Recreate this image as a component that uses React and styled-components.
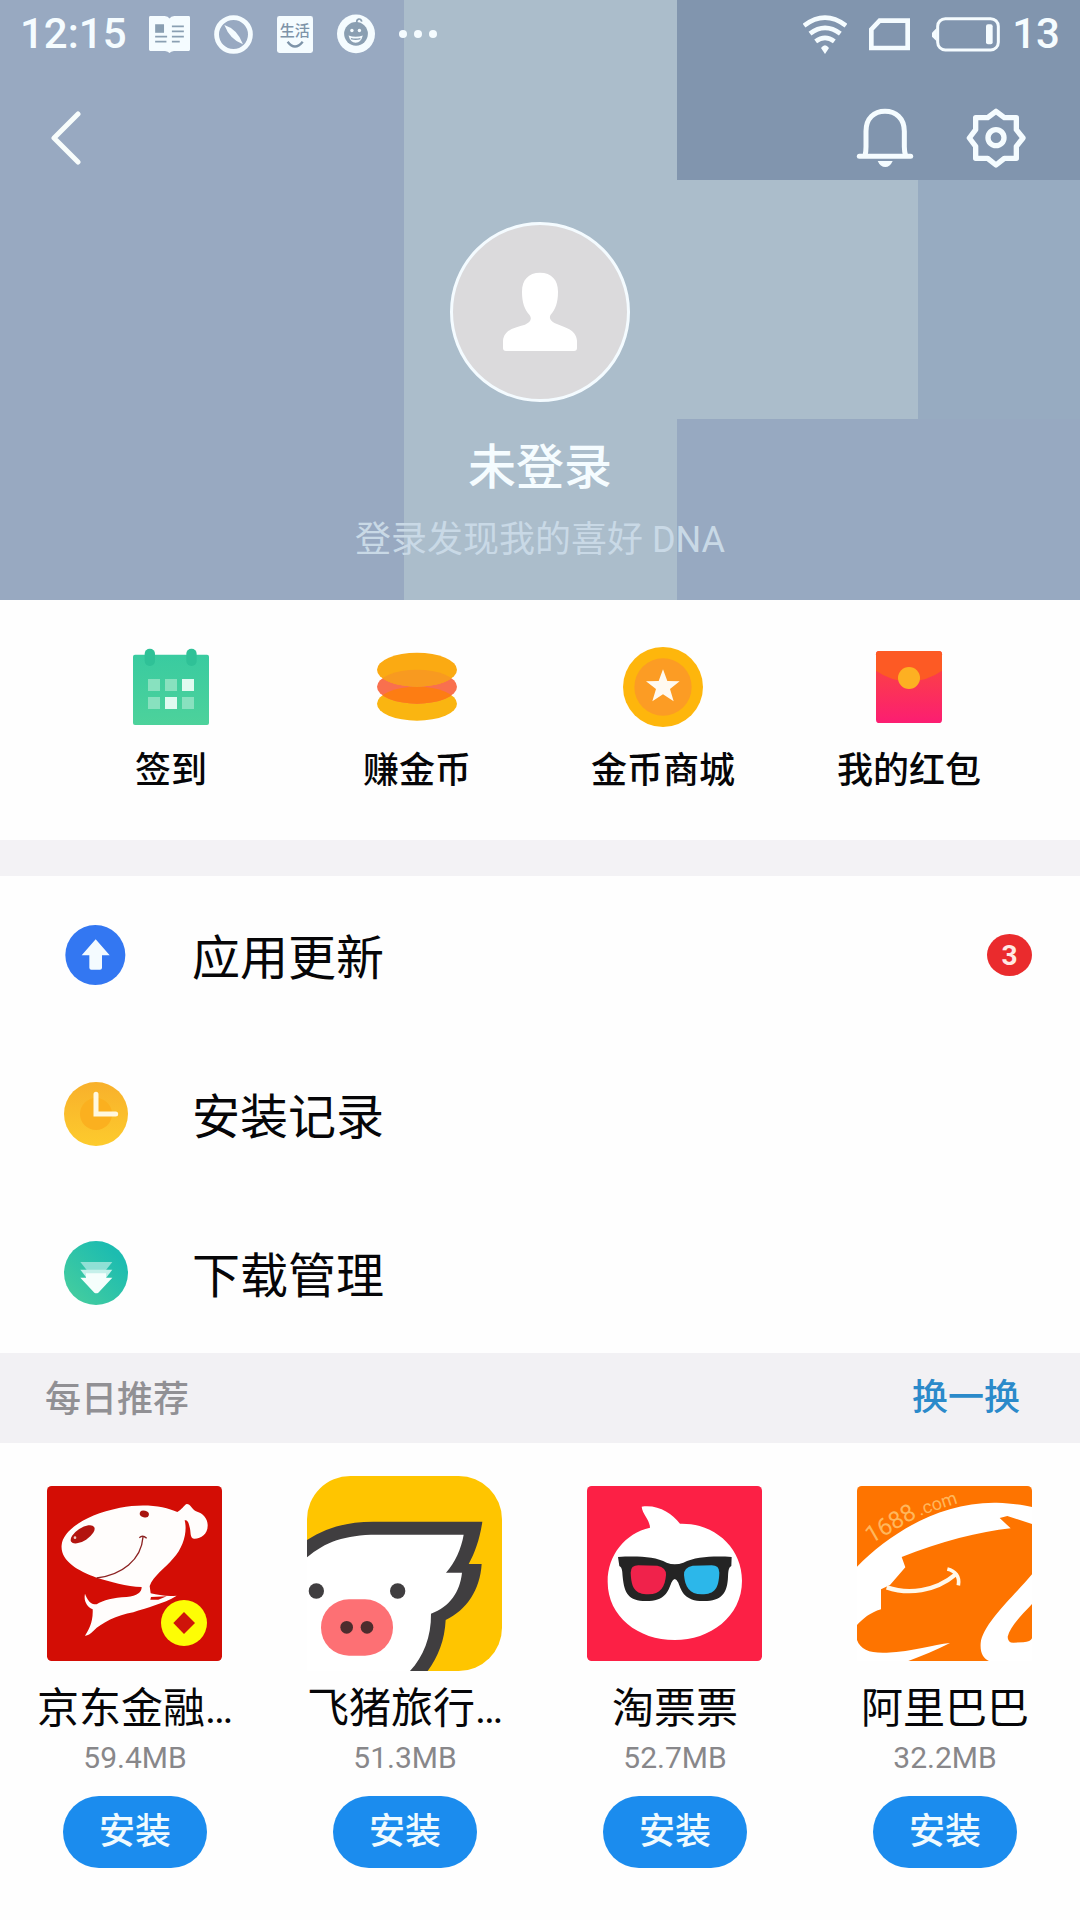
import React from 'react';
import styled, { createGlobalStyle } from 'styled-components';

const GlobalStyle = createGlobalStyle`
    * {
        box-sizing: border-box;
    }

    body {
        margin: 0;
        background-color: #fefefe;
        color: #060608;
        font-family: Roboto, "Noto Sans CJK SC", sans-serif;
    }

    button {
        margin: 0;
        padding: 0;
        border: none;
        background: none;
        color: inherit;
        font-family: inherit;
        cursor: pointer;
    }

    svg {
        display: block;
        flex-shrink: 0;
    }
`;

const Page = styled.div`
    display: flex;
    flex-direction: column;
    width: 100%;
`;

/* the three bands of the colour mosaic behind the profile */
const Hero = styled.header`
    display: flex;
    flex-direction: column;
    color: #f5fcff;
    background:
        linear-gradient(90deg, #98a9c1 37.4%, #abbdcb 37.4% 62.7%, #8195ae 62.7%) 0 0 / 100% 180px no-repeat,
        linear-gradient(90deg, #98a9c1 37.4%, #abbdcb 37.4% 85%, #97abc1 85%) 0 180px / 100% 239px no-repeat,
        linear-gradient(90deg, #98a9c1 37.4%, #abbdcb 37.4% 62.7%, #97a9c1 62.7%) 0 419px / 100% 100% no-repeat;
`;

const StatusBar = styled.div`
    display: flex;
    justify-content: space-between;
    align-items: center;
    height: 68px;
    padding: 0 20px;
    font-size: 42px;
    font-weight: 500;
    line-height: 48px;
`;

const StatusGroup = styled.div`
    display: flex;
    align-items: center;
    gap: ${({ $gap }) => $gap}px;
`;

const NavBar = styled.nav`
    display: flex;
    justify-content: space-between;
    align-items: center;
    height: 140px;
    padding: 0 54px 0 50px;
`;

const NavActions = styled.div`
    display: flex;
    gap: 51px;
`;

const Profile = styled.div`
    display: flex;
    flex-direction: column;
    align-items: center;
    padding: 14px 0 36px;
`;

const Avatar = styled.button`
    display: flex;
    justify-content: center;
    align-items: center;
    width: 180px;
    height: 180px;
    border: 3px solid #f4fbff;
    border-radius: 50%;
    background-color: #dbdadc;
`;

const UserName = styled.h1`
    margin: 34px 0 16px;
    font-size: 48px;
    font-weight: 500;
    line-height: 64px;
`;

const Hint = styled.p`
    margin: 0;
    color: #c9d9e6;
    font-size: 36px;
    line-height: 48px;
`;

const Shortcuts = styled.section`
    display: grid;
    grid-template-columns: repeat(4, 1fr);
    padding: 47px 48px 45px;
    border-bottom: 36px solid #f3f2f5;
`;

const Shortcut = styled.button`
    display: flex;
    flex-direction: column;
    align-items: center;
    gap: 20px;
    font-size: 36px;
    font-weight: 500;
    line-height: 48px;
`;

const Menu = styled.section`
    display: flex;
    flex-direction: column;
`;

const MenuItem = styled.button`
    display: flex;
    align-items: center;
    gap: 64px;
    height: 159px;
    padding: 0 48px 2px 64px;
    font-size: 48px;
    line-height: 64px;
    text-align: left;
`;

const MenuLabel = styled.span`
    padding-top: 8px;
`;

const Badge = styled.span`
    margin-left: auto;
    width: 45px;
    height: 42px;
    border-radius: 50%;
    background-color: #ea2b2d;
    color: #ffe9e4;
    font-size: 28px;
    font-weight: 700;
    line-height: 44px;
    text-align: center;
`;

const SectionBar = styled.div`
    display: flex;
    justify-content: space-between;
    align-items: center;
    height: 90px;
    padding: 0 60px 0 45px;
    background-color: #f2f1f4;
`;

const SectionTitle = styled.h2`
    margin: 0;
    padding-top: 4px;
    color: #919094;
    font-size: 36px;
    font-weight: 500;
    line-height: 48px;
`;

const Refresh = styled.button`
    color: #2b8aca;
    font-size: 36px;
    font-weight: 500;
    line-height: 48px;
`;

const AppGrid = styled.section`
    display: grid;
    grid-template-columns: repeat(4, 1fr);
    padding: 33px 0 52px;
`;

const AppCard = styled.article`
    display: flex;
    flex-direction: column;
    align-items: center;
`;

const AppLogo = styled.div`
    display: flex;
    justify-content: center;
    align-items: center;
    height: 195px;
    padding-right: 2px;
`;

const AppName = styled.h3`
    margin: 10px 0 3px;
    font-size: 42px;
    font-weight: 400;
    line-height: 56px;
`;

const AppSize = styled.span`
    color: #88878a;
    font-size: 30px;
    line-height: 36px;
`;

const Install = styled.button`
    margin-top: 20px;
    width: 144px;
    height: 72px;
    border-radius: 36px;
    background-color: #1b8cee;
    color: #f0fbff;
    font-size: 36px;
    font-weight: 500;
    line-height: 48px;
`;

const Icon = ({ w, h, box, children }) => (
    <svg width={w} height={h || w} viewBox={box} fill="none" aria-hidden="true">
        {children}
    </svg>
);

const BookIcon = () => (
    <Icon w={41} h={37} box="432 45 120 108">
        <path d="M436 45H478Q488 46 492 52Q496 46 506 45H548Q552 45 552 49V143Q552 147 548 147H505Q496 148 492 153Q488 148 479 147H436Q432 147 432 143V49Q432 45 436 45Z" fill="#f5fcff" />
        <path d="M450 69H476V94H450Z" fill="#8a9fb2" />
        <path d="M450 105H485M450 120H483M499 75H534M499 90H534M499 105H534M499 120H522" stroke="#8a9fb2" strokeWidth="5" />
    </Icon>
);

const CompassIcon = () => (
    <Icon w={39} box="620 43 113 113">
        <circle cx="676.5" cy="99.5" r="49" stroke="#f5fcff" strokeWidth="14" />
        <path d="M650 72Q688 84 704 128Q666 114 650 72Z" fill="#f5fcff" />
    </Icon>
);

const LifeIcon = () => (
    <Icon w={36} h={37} box="801 45 105 108">
        <rect x="801" y="45" width="105" height="108" rx="7" fill="#f5fcff" />
        <text x="853" y="104" fill="#7d93a8" fontSize="44" textAnchor="middle" fontFamily="Noto Sans CJK SC, sans-serif">生活</text>
        <path d="M832 120Q853 148 876 120" stroke="#7d93a8" strokeWidth="7" />
    </Icon>
);

const FaceIcon = () => (
    <Icon w={38} h={40} box="975 41 112 115">
        <ellipse cx="1031" cy="98" rx="56" ry="57" fill="#f5fcff" />
        <circle cx="1031" cy="98" r="35" fill="#8a9fb2" />
        <path d="M1034 68C1030 52 1046 50 1048 62" stroke="#8a9fb2" strokeWidth="5" />
        <circle cx="1019" cy="88" r="5" fill="#f5fcff" />
        <circle cx="1041" cy="88" r="5" fill="#f5fcff" />
        <path d="M1009 103Q1030 110 1051 103Q1046 124 1030 124Q1014 124 1009 103Z" fill="#f5fcff" />
        <path d="M1016 112Q1030 116 1044 112" stroke="#8a9fb2" strokeWidth="4" />
    </Icon>
);

const MoreIcon = () => (
    <Icon w={38} h={10} box="0 0 38 10">
        <circle cx="4" cy="5" r="4" fill="#f5fcff" />
        <circle cx="19" cy="5" r="4" fill="#f5fcff" />
        <circle cx="34" cy="5" r="4" fill="#f5fcff" />
    </Icon>
);

const WifiIcon = () => (
    <Icon w={44} h={39} box="126 41 132 117">
        <path d="M129 73Q192 25 255 73M147 97Q192 62 238 97M164 120Q192 99 220 120" stroke="#f5fcff" strokeWidth="14" />
        <path d="M180 140Q192 124 204 140L192 158Z" fill="#f5fcff" />
    </Icon>
);

const SimIcon = () => (
    <Icon w={41} h={33} box="330 50 123 99">
        <path d="M337 140V84L362 58H446V140Z" stroke="#f5fcff" strokeWidth="14" />
    </Icon>
);

const BatteryIcon = () => (
    <Icon w={68} h={35} box="516 47 204 105">
        <rect x="533" y="52" width="182" height="94" rx="23" stroke="#f5fcff" strokeWidth="9" />
        <path d="M530 80L516 94V106L530 120Z" fill="#f5fcff" />
        <rect x="678" y="69" width="20" height="60" rx="6" fill="#f5fcff" />
    </Icon>
);

const BackIcon = () => (
    <Icon w={31} h={54} box="0 0 31 54">
        <path d="M28 3L4 27L28 51" stroke="#f8fdfc" strokeWidth="5" strokeLinecap="round" strokeLinejoin="round" />
    </Icon>
);

const BellIcon = () => (
    <Icon w={60} box="285 324 180 180">
        <path d="M315 468Q318 455 318 440V394C318 354 343 334 375 334C407 334 433 354 433 394V440Q433 455 437 468" stroke="#f5fcff" strokeWidth="15" />
        <path d="M298 469H452" stroke="#f5fcff" strokeWidth="15" strokeLinecap="round" />
        <path d="M353 483H398Q390 501 376 501Q361 501 353 483Z" fill="#f5fcff" />
    </Icon>
);

const GearIcon = () => (
    <Icon w={60} box="618 324 180 180">
        <path
            d="M647 353H683L708 334L733 353H769V389L789 414L769 439V475H733L708 495L683 475H647V439L628 414L647 389Z"
            stroke="#f5fcff"
            strokeWidth="16"
            strokeLinejoin="round"
        />
        <circle cx="708" cy="413" r="24" stroke="#f5fcff" strokeWidth="16" />
    </Icon>
);

const PersonIcon = () => (
    <Icon w={90} box="495 201 270 270">
        <path d="M630 218C665 218 684 240 684 275C684 308 676 328 662 344C656 354 662 364 675 370C705 383 738 388 741 422V444Q741 453 732 453H528Q519 453 519 444V422C522 388 555 383 585 374C600 367 608 358 598 344C584 328 576 308 576 275C576 240 595 218 630 218Z" fill="#fff" />
    </Icon>
);

const CalendarIcon = () => (
    <Icon w={80} box="93 51 240 240">
        <defs>
            <linearGradient id="calendar" x1="0" y1="0" x2="0" y2="1">
                <stop offset="0" stopColor="#39cba0" />
                <stop offset="1" stopColor="#4dd29b" />
            </linearGradient>
        </defs>
        <rect x="99" y="74" width="228" height="211" rx="6" fill="url(#calendar)" />
        <rect x="134" y="56" width="31" height="52" rx="15" fill="#2fc197" />
        <rect x="259" y="56" width="31" height="52" rx="15" fill="#2fc197" />
        <path d="M144 147h36v36h-36zM195 147h36v36h-36zM144 201h36v36h-36zM246 201h36v36h-36z" fill="#88e1bf" />
        <path d="M246 147h36v36h-36zM195 201h36v36h-36z" fill="#e0faf0" />
    </Icon>
);

const CoinsIcon = () => (
    <Icon w={80} box="831 51 240 240">
        <defs>
            <clipPath id="coinTop"><ellipse cx="951" cy="119" rx="120" ry="51" /></clipPath>
            <clipPath id="coinBottom"><ellipse cx="951" cy="221" rx="120" ry="51" /></clipPath>
        </defs>
        <ellipse cx="951" cy="221" rx="120" ry="51" fill="#fab511" />
        <ellipse cx="951" cy="170" rx="120" ry="51" fill="#f9704e" />
        <ellipse cx="951" cy="170" rx="120" ry="51" fill="#fd7d13" clipPath="url(#coinBottom)" />
        <ellipse cx="951" cy="119" rx="120" ry="51" fill="#fbaa12" />
        <ellipse cx="951" cy="170" rx="120" ry="51" fill="#f89a20" clipPath="url(#coinTop)" />
    </Icon>
);

const StarCoinIcon = () => (
    <Icon w={80} box="249 51 240 240">
        <circle cx="369" cy="171" r="120" fill="#feb60c" />
        <circle cx="369" cy="171" r="86" fill="#fc9c24" />
        <path d="M369 118L382 153L419 154L390 177L401 214L369 193L337 214L348 177L318 154L356 153Z" fill="#fffaf0" />
    </Icon>
);

const EnvelopeIcon = () => (
    <Icon w={80} box="987 51 240 240">
        <defs>
            <linearGradient id="envelope" x1="0" y1="0" x2="0" y2="1">
                <stop offset="0.3" stopColor="#fb3d4a" />
                <stop offset="1" stopColor="#fc1d72" />
            </linearGradient>
        </defs>
        <rect x="1008" y="63" width="198" height="216" rx="10" fill="url(#envelope)" />
        <path d="M1008 122V73Q1008 63 1018 63H1196Q1206 63 1206 73V122Q1160 154 1107 154Q1054 154 1008 122Z" fill="#fd5a24" />
        <circle cx="1107" cy="144" r="33" fill="#fdb022" />
    </Icon>
);

const UpdateIcon = () => (
    <Icon w={64} box="102 67 192 192">
        <circle cx="196" cy="163" r="90" fill="#3377f2" />
        <path d="M197 116L239 164H216V201Q216 207 210 207H184Q178 207 178 201V164H155Z" fill="#f4fbff" />
    </Icon>
);

const ClockIcon = () => (
    <Icon w={64} box="102 546 192 192">
        <defs>
            <linearGradient id="clock" x1="0" y1="0" x2="0" y2="1">
                <stop offset="0" stopColor="#f8b02b" />
                <stop offset="1" stopColor="#fdcb2d" />
            </linearGradient>
        </defs>
        <circle cx="198" cy="642" r="96" fill="url(#clock)" />
        <circle cx="198" cy="642" r="48" fill="#fbb01f" />
        <path d="M198 583V642H257" stroke="#fff8e0" strokeWidth="15" strokeLinecap="round" />
    </Icon>
);

const DownloadIcon = () => (
    <Icon w={64} box="102 1023 192 192">
        <defs>
            <linearGradient id="download" x1="1" y1="0" x2="0" y2="1">
                <stop offset="0.2" stopColor="#1dbcb0" />
                <stop offset="1" stopColor="#4acf9c" />
            </linearGradient>
        </defs>
        <circle cx="198" cy="1119" r="96" fill="url(#download)" />
        <path d="M151 1086H247L228 1110H170Z" fill="#90e0d5" />
        <path d="M151 1109H247L228 1134H170Z" fill="#c5f0ea" />
        <path d="M151 1133H168V1120H228V1133H247L205 1178Q199 1182 193 1178Z" fill="#f5fefc" />
    </Icon>
);

const JdLogo = () => (
    <Icon w={175} box="51 78 525 525">
        <rect x="51" y="78" width="525" height="525" rx="14" fill="#d30d05" />
        <path
            d="M95 255C98 215 160 165 270 143C340 129 405 138 442 156C455 150 462 135 470 132C480 131 487 148 498 154C520 160 534 178 533 197C533 222 512 237 492 236C478 234 484 215 478 198C476 188 472 179 464 181C473 215 460 262 430 295C405 325 370 348 359 378L362 400C385 405 410 410 440 407C400 432 350 442 310 457C260 466 215 488 190 513C180 522 172 528 165 527C175 510 190 488 188 448C172 440 160 425 165 401C172 420 182 434 200 433C220 420 250 413 290 411C322 407 335 398 335 381C290 380 240 364 200 353C140 332 90 300 95 255Z"
            fill="#fffdfc"
        />
        <path d="M363 411L410 409L385 419H361Z" fill="#d30d05" />
        <ellipse cx="158" cy="223" rx="41" ry="19" transform="rotate(-33 158 223)" fill="#b3140f" />
        <circle cx="135" cy="233" r="4" fill="#f4c9c4" />
        <ellipse cx="343" cy="162" rx="14" ry="10" transform="rotate(15 343 162)" fill="#a8140f" />
        <path d="M200 354C275 345 334 300 339 231" stroke="#8c2222" strokeWidth="4" />
        <path d="M328 233Q338 224 350 235" stroke="#8c2222" strokeWidth="4" />
        <circle cx="462" cy="489" r="69" fill="#fdfd05" />
        <path d="M462 456L495 489L462 522L430 489Z" fill="#cf140a" />
    </Icon>
);

const FliggyLogo = () => (
    <Icon w={195} box="51 48 585 585">
        <rect x="51" y="48" width="585" height="585" rx="130" fill="#ffc500" />
        <path d="M51 240C110 203 170 185 250 185H577C570 235 555 278 536 312H575C570 390 530 450 467 480C464 540 445 590 413 633H51Z" fill="#403e40" />
        <path d="M51 292C105 246 165 224 260 224H521C514 265 495 308 468 338H516C510 395 480 440 423 461C424 530 400 590 360 633H51Z" fill="#fff" />
        <circle cx="79" cy="393" r="23" fill="#403e40" />
        <circle cx="323" cy="393" r="23" fill="#403e40" />
        <rect x="93" y="418" width="216" height="169" rx="84" fill="#fd7074" />
        <circle cx="170" cy="502" r="19" fill="#4c2c2d" />
        <circle cx="231" cy="502" r="19" fill="#4c2c2d" />
    </Icon>
);

const TaopiaopiaoLogo = () => (
    <Icon w={175} box="51 78 525 525">
        <rect x="51" y="78" width="525" height="525" rx="14" fill="#fc2045" />
        <path d="M240 203C239 177 218 165 215 140C265 133 305 160 330 191C430 188 516 260 516 362C516 470 420 540 314 540C205 540 113 470 113 365C113 285 165 220 240 203Z" fill="#fff" />
        <path
            d="M144 291C205 288 255 290 290 308Q314 318 340 308C378 290 430 288 485 291L484 318C475 322 475 335 474 350C472 400 455 422 402 423C345 424 335 395 325 368Q314 346 304 368C294 395 285 423 228 423C175 422 163 400 158 350C157 335 157 322 148 318Z"
            fill="#242424"
        />
        <path d="M182 338Q182 316 205 316L262 317Q289 322 288 345C285 380 272 403 235 403C195 402 184 385 182 338Z" fill="#f0224b" />
        <path d="M448 338Q448 316 425 316L368 317Q341 322 342 345C345 380 358 403 395 403C435 402 446 385 448 338Z" fill="#2cb7ea" />
    </Icon>
);

const LogoText = styled.text`
    fill: #ffb75c;
    font-family: Roboto, sans-serif;
    font-weight: 400;
`;

const AlibabaLogo = () => (
    <Icon w={175} box="51 78 525 525">
        <rect x="51" y="78" width="525" height="525" rx="14" fill="#fe7400" />
        <path d="M51 320C150 220 300 125 470 128C515 130 550 135 576 141V192L502 168L479 174L512 205C420 215 300 245 185 291L196 322L150 375L123 388V448C90 458 70 475 51 495Z" fill="#fff" />
        <path d="M140 382C205 404 285 395 347 343" stroke="#fff8ea" strokeWidth="13" />
        <path d="M322 327C346 333 360 350 355 376" stroke="#fff8ea" strokeWidth="11" />
        <path d="M51 540C62 570 90 580 140 578C220 575 280 553 330 549C290 570 245 588 205 603H51Z" fill="#fff" />
        <path d="M576 343C530 400 428 490 422 550C420 580 430 595 447 603H576Z" fill="#fff" />
        <path d="M576 432C545 465 510 500 503 530Q503 548 520 548L550 547Q572 545 576 535Z" fill="#fe7400" />
        <LogoText transform="translate(93 252) rotate(-30)" fontSize="72">1688</LogoText>
        <LogoText transform="translate(240 167) rotate(-18)" fontSize="54">.com</LogoText>
    </Icon>
);

const shortcuts = [
    { label: '签到', icon: <CalendarIcon /> },
    { label: '赚金币', icon: <CoinsIcon /> },
    { label: '金币商城', icon: <StarCoinIcon /> },
    { label: '我的红包', icon: <EnvelopeIcon /> },
];

const menu = [
    { label: '应用更新', icon: <UpdateIcon />, count: 3 },
    { label: '安装记录', icon: <ClockIcon /> },
    { label: '下载管理', icon: <DownloadIcon /> },
];

const apps = [
    { name: '京东金融…', size: '59.4MB', logo: <JdLogo /> },
    { name: '飞猪旅行…', size: '51.3MB', logo: <FliggyLogo /> },
    { name: '淘票票', size: '52.7MB', logo: <TaopiaopiaoLogo /> },
    { name: '阿里巴巴', size: '32.2MB', logo: <AlibabaLogo /> },
];

const App = () => {
    return (
        <Page>
            <GlobalStyle />
            <Hero>
                <StatusBar>
                    <StatusGroup $gap={22}>
                        <span>12:15</span>
                        <StatusGroup $gap={24}>
                            <BookIcon />
                            <CompassIcon />
                            <LifeIcon />
                            <FaceIcon />
                            <MoreIcon />
                        </StatusGroup>
                    </StatusGroup>
                    <StatusGroup $gap={22}>
                        <WifiIcon />
                        <SimIcon />
                        <StatusGroup $gap={12}>
                            <BatteryIcon />
                            <span>13</span>
                        </StatusGroup>
                    </StatusGroup>
                </StatusBar>
                <NavBar>
                    <button aria-label="返回"><BackIcon /></button>
                    <NavActions>
                        <button aria-label="通知"><BellIcon /></button>
                        <button aria-label="设置"><GearIcon /></button>
                    </NavActions>
                </NavBar>
                <Profile>
                    <Avatar aria-label="登录"><PersonIcon /></Avatar>
                    <UserName>未登录</UserName>
                    <Hint>登录发现我的喜好 DNA</Hint>
                </Profile>
            </Hero>
            <Shortcuts>
                {shortcuts.map(({ label, icon }) => (
                    <Shortcut key={label}>
                        {icon}
                        <span>{label}</span>
                    </Shortcut>
                ))}
            </Shortcuts>
            <Menu>
                {menu.map(({ label, icon, count }) => (
                    <MenuItem key={label}>
                        {icon}
                        <MenuLabel>{label}</MenuLabel>
                        {count && <Badge>{count}</Badge>}
                    </MenuItem>
                ))}
            </Menu>
            <SectionBar>
                <SectionTitle>每日推荐</SectionTitle>
                <Refresh>换一换</Refresh>
            </SectionBar>
            <AppGrid>
                {apps.map(({ name, size, logo }) => (
                    <AppCard key={name}>
                        <AppLogo>{logo}</AppLogo>
                        <AppName>{name}</AppName>
                        <AppSize>{size}</AppSize>
                        <Install>安装</Install>
                    </AppCard>
                ))}
            </AppGrid>
        </Page>
    );
}

export default App;
